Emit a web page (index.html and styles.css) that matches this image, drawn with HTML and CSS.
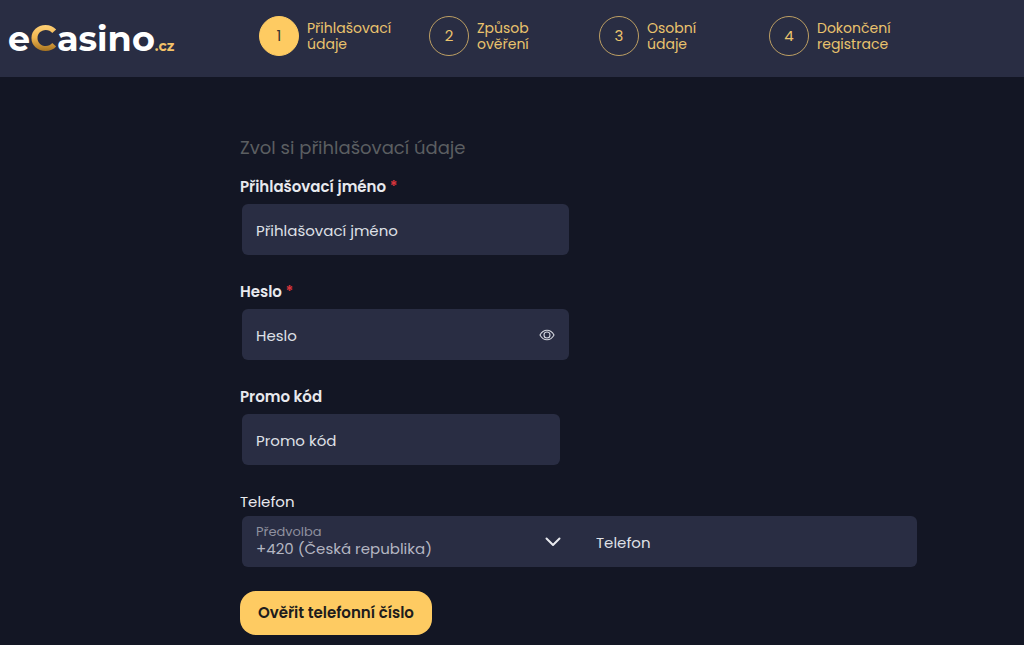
FILE: index.html
```html
<!DOCTYPE html>
<html lang="cs">
<head>
<meta charset="utf-8">
<meta name="viewport" content="width=device-width, initial-scale=1">
<title>eCasino.cz – registrace</title>
<link rel="stylesheet" href="styles.css">
</head>
<body>
<header class="header">
  <a class="logo" href="#"><span>e</span><span class="logo-c">C</span><span>asino</span><span class="logo-tld">.cz</span></a>
  <ol class="steps">
    <li class="step step-active" aria-current="step"><span class="step-number">1</span><span class="step-name">Přihlašovací údaje</span></li>
    <li class="step"><span class="step-number">2</span><span class="step-name">Způsob ověření</span></li>
    <li class="step"><span class="step-number">3</span><span class="step-name">Osobní údaje</span></li>
    <li class="step"><span class="step-number">4</span><span class="step-name">Dokončení registrace</span></li>
  </ol>
</header>
<main class="main">
  <form class="form">
    <h1 class="title">Zvol si přihlašovací údaje</h1>
    <div class="field">
      <label class="label" for="login">Přihlašovací jméno <span class="required">*</span></label>
      <div class="control"><input class="input" id="login" type="text" placeholder="Přihlašovací jméno"></div>
    </div>
    <div class="field">
      <label class="label" for="password">Heslo <span class="required">*</span></label>
      <div class="control">
        <input class="input" id="password" type="password" placeholder="Heslo">
        <button class="reveal" type="button" aria-label="Zobrazit heslo">
          <svg width="16" height="12" viewBox="0 0 16 12" fill="none" stroke="currentColor" stroke-width="1.1"><path d="M1 6C2.600 3 5 1.200 8 1.200S13.400 3 15 6C13.400 9 11 10.800 8 10.800S2.600 9 1 6Z"/><circle cx="8" cy="6" r="3"/></svg>
        </button>
      </div>
    </div>
    <div class="field">
      <label class="label" for="promo">Promo kód</label>
      <div class="control control-promo"><input class="input" id="promo" type="text" placeholder="Promo kód"></div>
    </div>
    <div class="field field-phone">
      <label class="label label-light" for="phone">Telefon</label>
      <div class="phone">
        <div class="prefix">
          <label class="prefix-label" for="prefix">Předvolba</label>
          <select class="prefix-select" id="prefix"><option>+420 (Česká republika)</option></select>
          <svg class="chevron" width="16" height="10" viewBox="0 0 16 10" fill="none" stroke="currentColor" stroke-width="2" stroke-linecap="round" stroke-linejoin="round"><path d="M1.500 1.500 8 8l6.500-6.500"/></svg>
        </div>
        <input class="input phone-input" id="phone" type="tel" placeholder="Telefon">
      </div>
    </div>
    <button class="submit" type="submit">Ověřit telefonní číslo</button>
  </form>
</main>
</body>
</html>
```
FILE: styles.css
```css
* { box-sizing: border-box; }
body {
  margin: 0;
  background: #131624;
  color: #e8e9ee;
  font: 15px/24px Poppins, Inter, sans-serif;
}
.header {
  display: flex;
  align-items: flex-start;
  min-height: 77px;
  padding: 16px 8px 0;
  background: #292d43;
}
.logo {
  flex: 0 0 251px;
  color: #fff;
  font: 700 35px/44px Montserrat, Inter, sans-serif;
  text-decoration: none;
}
.logo-c {
  background: linear-gradient(#ffd27a 20%, #f0b650 50%, #a87420 80%);
  background-clip: text;
  -webkit-background-clip: text;
  color: transparent;
  font-size: 37px;
}
.logo-tld { color: #f3c269; font-size: 14px; }
.steps {
  display: grid;
  grid-template-columns: repeat(4, 170px);
  margin: 0;
  padding: 0;
  list-style: none;
}
.step { display: flex; align-items: center; gap: 8px; color: #eac36d; }
.step-number {
  display: flex;
  flex: none;
  align-items: center;
  justify-content: center;
  width: 40px;
  height: 40px;
  border: 1px solid #bd9f63;
  border-radius: 50%;
}
.step-active .step-number { background: #fecb62; border-color: #fecb62; color: #3a3430; }
.step-name { width: min-content; font-size: 14px; line-height: 16px; }
.main { padding: 56px 24px 8px 240px; }
.form { max-width: 677px; }
.title { margin: 0 0 12px; color: #5b5e61; font-size: 18px; font-weight: 400; line-height: 30px; }
.field { margin-bottom: 25px; }
.label { display: block; margin-bottom: 5px; font-weight: 600; }
.label-light { margin-bottom: 2px; font-weight: 400; }
.required { color: #d8343b; }
.control { position: relative; width: 327px; max-width: 100%; margin-left: 2px; }
.control-promo { width: 318px; }
.input {
  display: block;
  width: 100%;
  height: 51px;
  padding: 2px 14px 0;
  border: 0;
  border-radius: 6px;
  background: #292d43;
  color: #dfe0e7;
  font: inherit;
}
.input::placeholder { color: #dfe0e7; opacity: 1; }
.reveal {
  position: absolute;
  top: 0;
  right: 0;
  display: grid;
  place-items: center;
  width: 44px;
  height: 51px;
  padding: 0;
  border: 0;
  background: none;
  color: #d5d7df;
}
.phone { display: flex; margin-left: 2px; border-radius: 6px; background: #292d43; }
.prefix { position: relative; flex: 0 1 340px; }
.prefix-label { position: absolute; top: 8px; left: 14px; color: #8e909f; font-size: 13px; line-height: 16px; }
.prefix-select {
  appearance: none;
  width: 100%;
  height: 51px;
  padding: 14px 40px 0 14px;
  border: 0;
  background: none;
  color: #b4b6c2;
  font: inherit;
}
.chevron { position: absolute; top: 21px; right: 21px; pointer-events: none; }
.phone-input { flex: 1; min-width: 0; background: none; }
.field-phone { margin-bottom: 24px; }
.submit {
  height: 44px;
  padding: 0 18px;
  border: 0;
  border-radius: 16px;
  background: #fecb62;
  color: #201c1c;
  font: inherit;
  font-weight: 600;
}
```
